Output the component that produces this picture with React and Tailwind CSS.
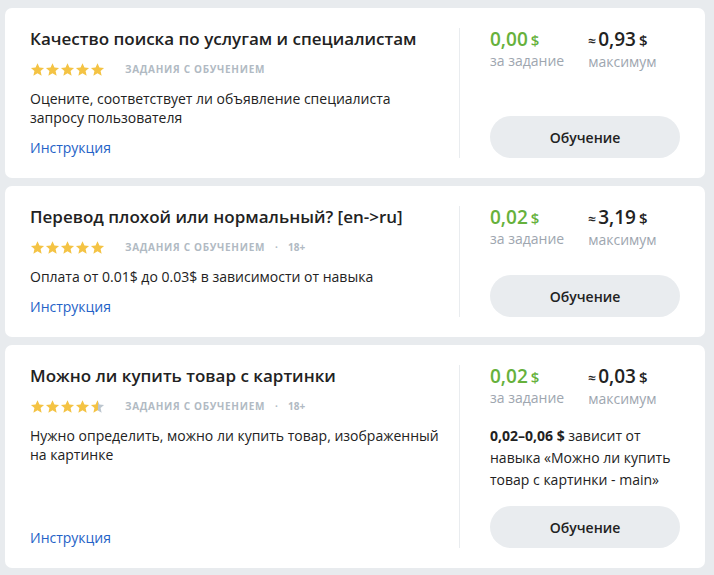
import React from "react";

const font = { fontFamily: '"Open Sans", "Noto Sans", sans-serif' };

function Star({ fill = "full" }) {
  const id = React.useId();
  return (
    <svg width="15" height="15" viewBox="0 0 24 24" className="shrink-0">
      <defs>
        <linearGradient id={id} x1="0" x2="1" y1="0" y2="0">
          <stop offset="55%" stopColor="#f4c344" />
          <stop offset="55%" stopColor="#bcc6cf" />
        </linearGradient>
      </defs>
      <path
        d="M12 1.8l3.1 6.9 7.4.7-5.6 5 1.7 7.4L12 17.9l-6.6 3.9 1.7-7.4-5.6-5 7.4-.7z"
        fill={fill === "half" ? `url(#${id})` : "#f4c344"}
      />
    </svg>
  );
}

function Stars({ half }) {
  return (
    <div className="flex items-center">
      <Star />
      <Star />
      <Star />
      <Star />
      <Star fill={half ? "half" : "full"} />
    </div>
  );
}

function Card({ title, desc, half, adult, price, max, note }) {
  return (
    <div className="flex rounded-[7px] bg-white px-[25px] py-[20px]">
      <div className="flex flex-1 flex-col pr-4">
        <div className="text-[17px] font-semibold leading-[22px] text-[#222]">{title}</div>
        <div className="mt-[11px] flex h-[16px] items-center">
          <Stars half={half} />
          <span className="ml-[20px] text-[10px] font-bold uppercase leading-[16px] tracking-[0.07em] text-[#b1bac3]">
            Задания с обучением
          </span>
          {adult && (
            <>
              <span className="ml-[10px] text-[10px] font-bold text-[#b1bac3]">·</span>
              <span className="ml-[10px] text-[10px] font-bold leading-[16px] text-[#b1bac3]">18+</span>
            </>
          )}
        </div>
        <div className="mt-[12px] text-[14px] leading-[19px] text-[#222]">{desc}</div>
        <div className="mt-auto pt-[11px] text-[14px] leading-[20px] text-[#2462c7]">Инструкция</div>
      </div>
      <div className="flex w-[221px] shrink-0 flex-col border-l border-[#e9ecef] pl-[30px]">
        <div className="flex gap-6">
          <div className="flex flex-col">
            <div className="flex items-baseline leading-[22px] text-[#66b13c]">
              <span className="text-[19px] font-semibold">{price}</span>
              <span className="ml-[3px] text-[15px] font-semibold">$</span>
            </div>
            <div className="text-[14px] leading-[20px] text-[#9ea6af]">за задание</div>
          </div>
          <div className="flex flex-col">
            <div className="flex items-baseline leading-[22px] text-[#222]">
              <span className="mr-[2px] text-[14px] font-semibold">≈</span>
              <span className="text-[19px] font-semibold">{max}</span>
              <span className="ml-[3px] text-[15px] font-semibold">$</span>
            </div>
            <div className="text-[14px] leading-[20px] text-[#9ea6af]">максимум</div>
          </div>
        </div>
        {note && (
          <p className="mt-[16px] mb-[15px] text-[14px] leading-[22px] text-[#222]">
            <b className="font-bold">0,02–0,06 $</b> зависит от навыка «Можно ли купить товар с картинки - main»
          </p>
        )}
        <button className="mt-auto h-[42px] w-full shrink-0 rounded-full bg-[#e9ecef] text-[14px] font-semibold text-[#222]" style={font}>
          Обучение
        </button>
      </div>
    </div>
  );
}

export default function App() {
  return (
    <div className="min-h-[575px] bg-[#e8ebee] px-[5px] pt-[8px]" style={font}>
      <div className="flex w-[700px] flex-col gap-[8px]">
        <Card
          title="Качество поиска по услугам и специалистам"
          desc={<>Оцените, соответствует ли объявление специалиста<br />запросу пользователя</>}
          price="0,00"
          max="0,93"
        />
        <Card
          title="Перевод плохой или нормальный? [en->ru]"
          desc="Оплата от 0.01$ до 0.03$ в зависимости от навыка"
          adult
          price="0,02"
          max="3,19"
        />
        <Card
          title="Можно ли купить товар с картинки"
          desc={<>Нужно определить, можно ли купить товар, изображенный<br />на картинке</>}
          adult
          half
          price="0,02"
          max="0,03"
          note
        />
      </div>
    </div>
  );
}
